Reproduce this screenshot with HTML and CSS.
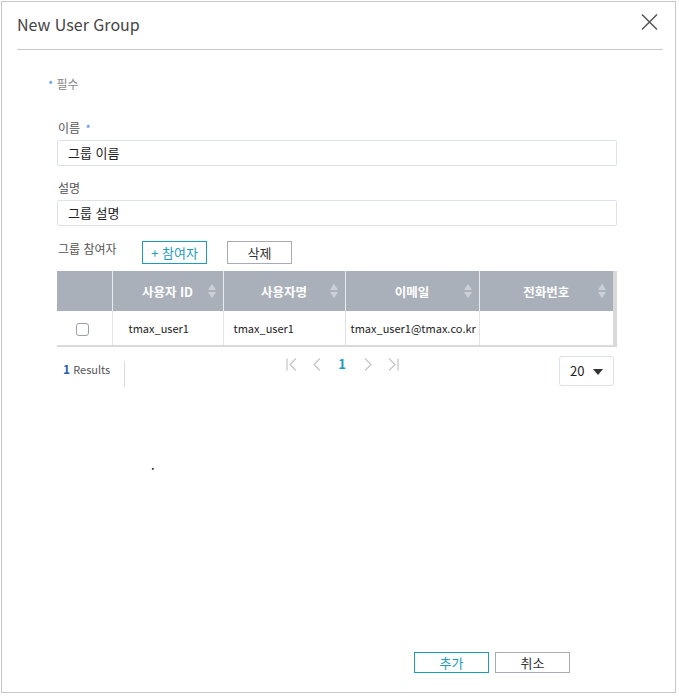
FILE: index.html
```html
<!DOCTYPE html>
<html lang="ko">
<head>
<meta charset="utf-8">
<title>New User Group</title>
<link rel="stylesheet" href="styles.css">
</head>
<body>
<div class="dialog">
  <div class="dlg-header">
    <h1 class="dlg-title">New User Group</h1>
    <button class="dlg-close" aria-label="close">
      <svg width="17" height="18" viewBox="0 0 17 18"><path d="M1 1.5L16 16.5M16 1.5L1 16.5" stroke="#555" stroke-width="1.5" fill="none"/></svg>
    </button>
  </div>
  <div class="dlg-body">
    <div class="required-note"><span class="req">*</span> 필수</div>
    <div class="form">
      <div class="field-label">이름 <span class="req">*</span></div>
      <div class="input">그룹 이름</div>
      <div class="field-label second">설명</div>
      <div class="input">그룹 설명</div>
      <div class="members-row">
        <span class="field-label">그룹 참여자</span>
        <button class="btn btn-add">+ 참여자</button>
        <button class="btn btn-del">삭제</button>
      </div>
      <div class="table-wrap">
        <table class="grid">
          <thead>
            <tr>
              <th class="c-check"></th>
              <th class="c-id">사용자 ID<span class="sort"></span></th>
              <th class="c-name">사용자명<span class="sort"></span></th>
              <th class="c-mail">이메일<span class="sort"></span></th>
              <th class="c-phone">전화번호<span class="sort"></span></th>
            </tr>
          </thead>
          <tbody>
            <tr>
              <td class="c-check"><span class="checkbox"></span></td>
              <td class="c-id">tmax_user1</td>
              <td class="c-name">tmax_user1</td>
              <td class="c-mail">tmax_user1@tmax.co.kr</td>
              <td class="c-phone"></td>
            </tr>
          </tbody>
        </table>
      </div>
      <div class="pager-row">
        <div class="results"><b>1</b> Results</div>
        <div class="pager">
          <span class="pg"><svg width="11" height="13" viewBox="0 0 11 13"><path d="M1 0.5V12.5M10 0.5L4 6.5L10 12.5" stroke="#c4c4c4" stroke-width="1.2" fill="none"/></svg></span>
          <span class="pg"><svg width="8" height="13" viewBox="0 0 8 13"><path d="M7 0.5L1 6.5L7 12.5" stroke="#c4c4c4" stroke-width="1.2" fill="none"/></svg></span>
          <span class="pg pg-num">1</span>
          <span class="pg"><svg width="8" height="13" viewBox="0 0 8 13"><path d="M1 0.5L7 6.5L1 12.5" stroke="#c4c4c4" stroke-width="1.2" fill="none"/></svg></span>
          <span class="pg"><svg width="11" height="13" viewBox="0 0 11 13"><path d="M1 0.5L7 6.5L1 12.5M10 0.5V12.5" stroke="#c4c4c4" stroke-width="1.2" fill="none"/></svg></span>
        </div>
        <div class="page-size">20<span class="caret"></span></div>
      </div>
      <div class="stray">.</div>
    </div>
  </div>
  <div class="dlg-footer">
    <button class="btn-foot btn-ok">추가</button>
    <button class="btn-foot btn-cancel">취소</button>
  </div>
</div>
</body>
</html>
```

FILE: styles.css
```css
* { box-sizing: border-box; }
html, body { margin: 0; padding: 0; background: #fff; }
body {
  font-family: "Noto Sans CJK KR", "Noto Sans", sans-serif;
  color: #333;
}
.dialog {
  margin: 1px;
  width: 675px;
  height: 692px;
  border: 1px solid #c8c8c8;
  display: flex;
  flex-direction: column;
}
.dlg-header {
  margin: 0 12px 0 15px;
  height: 48px;
  border-bottom: 1px solid #c8c8c8;
  display: flex;
  align-items: center;
  justify-content: space-between;
}
.dlg-title {
  margin: 0 0 3px 0;
  font-size: 16px;
  font-weight: 400;
  color: #444;
  line-height: 22px;
}
.dlg-close {
  border: 0;
  background: none;
  padding: 0;
  margin: 0 5px 8px 0;
  width: 17px;
  height: 18px;
  display: block;
}
.dlg-close svg { display: block; }
.dlg-body { padding: 0; }
.required-note {
  margin: 26px 0 0 46px;
  font-size: 12px;
  line-height: 16px;
  color: #888;
}
.req { color: #4a8fe0; font-size: 11px; vertical-align: top; }
.form {
  margin: 28px 58px 0 55px;
}
.field-label {
  font-size: 12px;
  line-height: 16px;
  color: #555;
  padding-left: 1px;
}
.field-label .req { margin-left: 2px; }
.field-label.second { margin-top: 14px; }
.input {
  margin-top: 4px;
  height: 26px;
  border: 1px solid #dbe2ea;
  border-radius: 2px;
  padding: 0 10px;
  font-size: 13px;
  line-height: 24px;
  color: #222;
}
.members-row {
  margin-top: 15px;
  display: flex;
  align-items: flex-start;
}
.members-row .field-label { width: 85px; }
.btn {
  font-family: inherit;
  height: 23px;
  width: 65px;
  padding: 0;
  background: #fff;
  font-size: 13px;
  line-height: 21px;
  border-radius: 0;
}
.btn-add { border: 1px solid #1b9cbc; color: #1b9cbc; }
.btn-del { border: 1px solid #a8abb5; color: #333; margin-left: 20px; }
.table-wrap {
  margin-top: 7px;
  border-right: 4px solid #d9d9d9;
  border-bottom: 2px solid #d9d9d9;
}
.grid {
  width: 100%;
  border-collapse: collapse;
  table-layout: fixed;
}
.grid th {
  position: relative;
  height: 40px;
  background: #aab0ba;
  color: #fff;
  font-size: 12.5px;
  font-weight: 700;
  text-align: center;
  border-left: 1px solid #e8eaee;
  padding: 0;
}
.grid th:first-child { border-left: 0; }
.grid td {
  height: 34px;
  font-size: 11px;
  color: #222;
  border-left: 1px solid #e2e2e2;
  padding: 0;
  vertical-align: middle;
}
.grid td:first-child { border-left: 0; }
.c-check { width: 55px; }
.c-id { width: 111px; }
.c-name { width: 122px; }
.c-mail { width: 134px; }
td.c-check { text-align: center; }
td.c-id { padding-left: 16px; }
td.c-name { padding-left: 10px; }
td.c-mail { padding-left: 5px; }
.sort {
  position: absolute;
  right: 6px;
  top: 13px;
  width: 9px;
  height: 14px;
}
.sort::before, .sort::after {
  content: "";
  position: absolute;
  left: 0;
  border-left: 4.5px solid transparent;
  border-right: 4.5px solid transparent;
}
.sort::before { top: 0; border-bottom: 6px solid #cdd1d7; }
.sort::after { bottom: 0; border-top: 6px solid #cdd1d7; }
.checkbox {
  display: inline-block;
  width: 13px;
  height: 13px;
  border: 1px solid #9a9ea6;
  border-radius: 3px;
  vertical-align: middle;
  margin: 0 3px 0 0;
}
.pager-row {
  margin-top: 9px;
  padding-right: 3px;
  display: grid;
  grid-template-columns: 68px 1fr 55px;
  align-items: start;
}
.results {
  margin-top: 5px;
  height: 26px;
  border-right: 1px solid #dcdcdc;
  padding-left: 6px;
  font-size: 11px;
  line-height: 16px;
  color: #555;
}
.results b { color: #2a5fa8; font-size: 12px; }
.pager {
  display: flex;
  justify-content: center;
  height: 16px;
}
.pg {
  width: 25.5px;
  height: 16px;
  display: flex;
  align-items: center;
  justify-content: center;
}
.pg svg { display: block; }
.pg-num {
  color: #1b9cbc;
  font-weight: 700;
  font-size: 13px;
  line-height: 16px;
}
.page-size {
  height: 30px;
  border: 1px solid #dbe2ea;
  border-radius: 3px;
  font-size: 13px;
  line-height: 28px;
  padding-left: 10px;
  color: #222;
  position: relative;
}
.caret {
  position: absolute;
  right: 10px;
  top: 12px;
  border-left: 5px solid transparent;
  border-right: 5px solid transparent;
  border-top: 6px solid #333;
}
.stray {
  margin: 70px 0 0 94px;
  font-size: 13px;
  line-height: 16px;
  color: #000;
}
.dlg-footer {
  margin-top: auto;
  padding: 0 105px 19px 0;
  display: flex;
  justify-content: flex-end;
  gap: 6px;
}
.btn-foot {
  font-family: inherit;
  width: 75px;
  height: 21px;
  padding: 0;
  background: #fff;
  font-size: 13px;
  line-height: 19px;
}
.btn-ok { border: 1px solid #1b9cbc; color: #1b9cbc; }
.btn-cancel { border: 1px solid #a8abb5; color: #333; }
```
